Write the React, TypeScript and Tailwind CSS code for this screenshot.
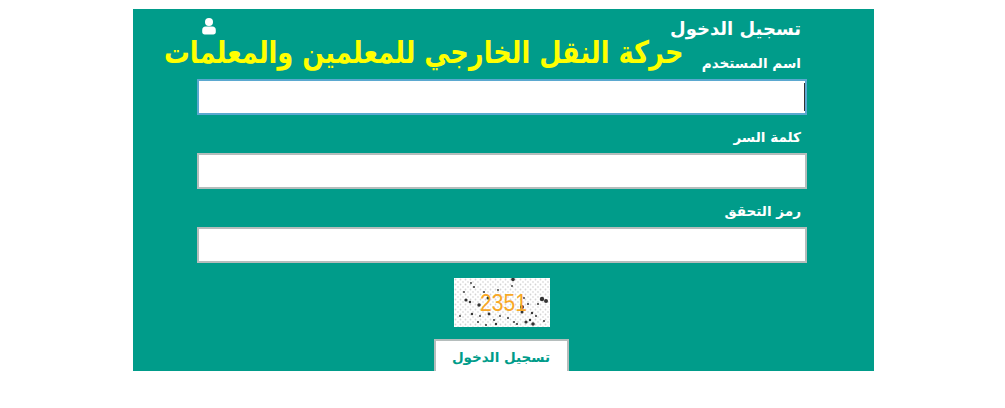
const font = "[font-family:'DejaVu_Sans','Noto_Sans',sans-serif]"

const specks = [
  [12, 22, 1.6], [16, 24, 1.2], [30, 14, 1], [25, 27, 1.7], [34, 20, 1.5], [17, 5, 0.9], [58, 8, 0.9], [59, 1.500, 1.8],
  [88, 21, 2.2], [92, 23, 2], [84, 26, 1], [68, 29, 2], [68, 34, 1.5], [78, 35, 1.2], [76, 42, 1.2], [82, 38, 1],
  [72, 44, 1.6], [79, 46, 1.8], [18, 36, 1.2], [24, 44, 1], [40, 42, 1], [42, 46, 1.2], [60, 44, 1], [46, 38, 0.9],
  [10, 14, 0.9], [6, 38, 0.9], [20, 9, 1], [74, 26, 1], [54, 40, 1], [35, 36, 1.4], [90, 43, 1], [32, 47, 1],
  [44, 12, 0.9], [70, 20, 0.9], [26, 38, 0.9], [63, 46, 1.1],
]

function Captcha() {
  return (
    <svg width="96" height="49" viewBox="0 0 96 49" className="block [direction:ltr]">
      <defs>
        <pattern id="dots" width="5" height="5" patternUnits="userSpaceOnUse">
          <circle cx="1.5" cy="1.5" r="0.9" fill="#d4d4d4" />
          <circle cx="4" cy="4" r="0.9" fill="#dedede" />
        </pattern>
      </defs>
      <rect width="96" height="49" fill="#fff" />
      <rect width="96" height="49" fill="url(#dots)" />
      {specks.map(([x, y, r], i) => (
        <circle key={i} cx={x} cy={y} r={r} fill="#111" fillOpacity="0.85" />
      ))}
      <text
        x="26"
        y="33"
        fill="#f9a825"
        fontSize="24"
        fontFamily="'Liberation Sans', sans-serif"
        textLength="47"
        lengthAdjust="spacingAndGlyphs"
      >
        2351
      </text>
    </svg>
  )
}

function Field({ label, cursor }: { label: string; cursor?: boolean }) {
  return (
    <div className="flex flex-col">
      <label className="h-[28px] pr-[6px] text-[13.600px] leading-[24px] font-bold text-white">{label}</label>
      <div
        className={`relative h-[36px] w-[610px] border-2 bg-white ${cursor ? "border-[#5ba8d0]" : "border-[#b5bdbc]"}`}
      >
        {cursor && <span className="absolute top-[2px] right-0 h-[28px] w-px bg-[#333]" />}
      </div>
    </div>
  )
}

export default function App() {
  return (
    <div dir="rtl" className={`min-h-[408px] bg-white pt-[9px] ${font}`}>
      <main className="relative mr-[131px] flex h-[362px] w-[741px] flex-col items-center overflow-hidden bg-[#009c8a] pr-[3px]">
        {/* page title sits over the login heading */}
        <h1 className="absolute top-[21px] left-[31px] origin-center scale-y-[1.2] text-[25.700px] leading-[44px] font-bold whitespace-nowrap text-[#ffff00]">
          حركة النقل الخارجي للمعلمين والمعلمات
        </h1>
        <svg width="14" height="18" viewBox="0 0 14 18" className="absolute top-[8px] left-[69px]">
          <circle cx="7" cy="5" r="4" fill="#fff" />
          <path d="M3.500 9.500h7c2 0 3.300 1.500 3.300 3.500v2c0 1.500-1 2.500-2.500 2.500H2.700C1.200 17.500 0.200 16.500 0.200 15v-2c0-2 1.300-3.500 3.300-3.500z" fill="#fff" />
        </svg>

        <div className="relative w-[610px]">
          <h2 className="h-[42px] pr-[6px] text-[18px] leading-[40px] font-semibold text-white">تسجيل الدخول</h2>
          <div className="flex flex-col gap-[10px]">
            <Field label="اسم المستخدم" cursor />
            <Field label="كلمة السر" />
            <Field label="رمز التحقق" />
          </div>
        </div>

        <div className="mt-[15px]">
          <Captcha />
        </div>

        <button className="mt-[12px] mr-[2px] h-[44px] w-[135px] shrink-0 border-2 border-[#b5bdbc] bg-white pb-[8px] text-[13.500px] font-bold text-[#009c8a]">
          تسجيل الدخول
        </button>
      </main>
    </div>
  )
}
